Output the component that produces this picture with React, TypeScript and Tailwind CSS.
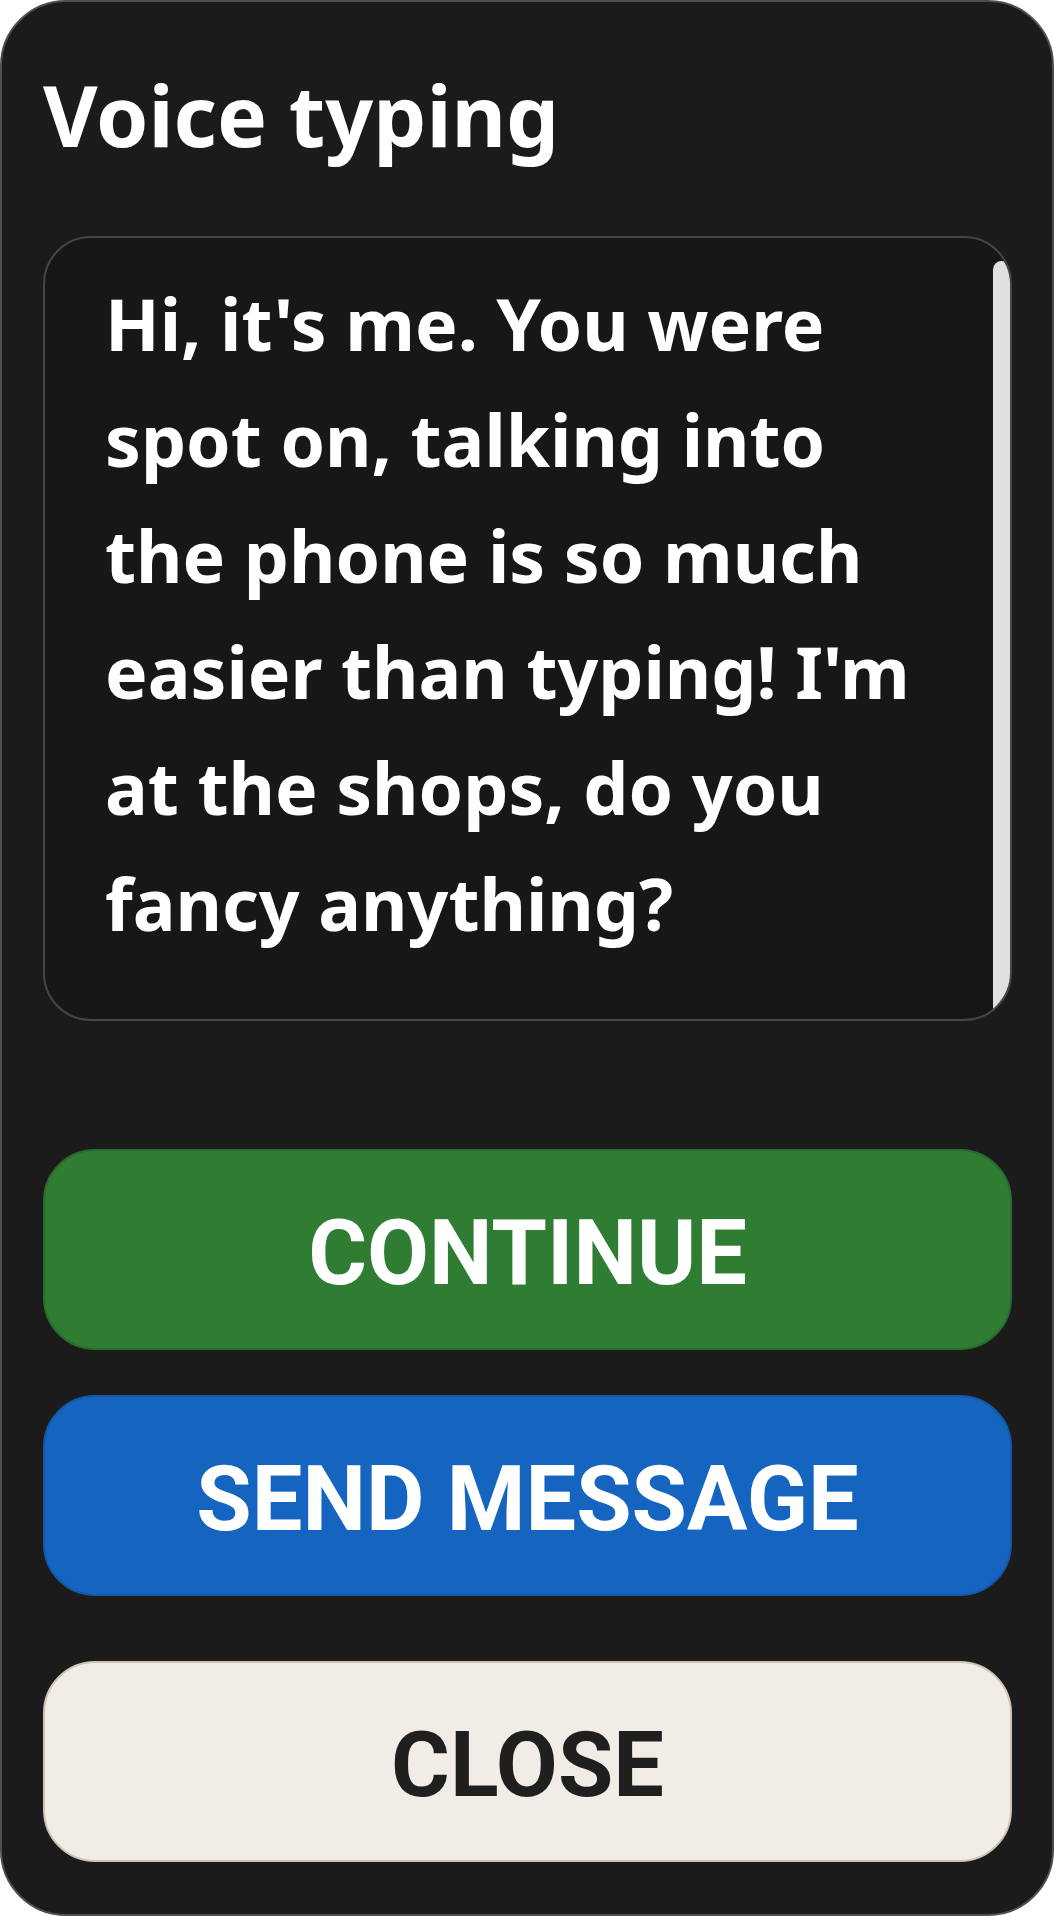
import React from 'react'

const message =
  "Hi, it's me. You were spot on, talking into the phone is so much easier than typing! I'm at the shops, do you fancy anything?"

type ActionProps = {
  label: string
  className: string
}

function ActionButton({ label, className }: ActionProps) {
  return (
    <button
      className={`flex h-[201px] w-full items-center justify-center rounded-[52px] border-2 pt-[9px] text-[90px] font-bold uppercase leading-none ${className}`}
      style={{ fontFamily: 'Roboto, "Liberation Sans", sans-serif' }}
    >
      {label}
    </button>
  )
}

export default function App() {
  return (
    <div className="min-h-screen bg-white">
      <div
        className="flex h-[1916px] w-[1054px] flex-col rounded-[66px] border-2 border-[#4f4f4f] bg-[#1b1b1b] pl-[41px] pr-[40px] pt-[63px]"
        style={{ fontFamily: '"Noto Sans", "Open Sans", sans-serif' }}
      >
        {/* title */}
        <h1 className="text-[84px] font-bold leading-[100px] text-white">Voice typing</h1>

        {/* transcript box with its scrollbar */}
        <div className="mt-[71px] flex h-[785px] overflow-hidden rounded-[48px] border-2 border-[#464646] bg-[#171717]">
          <div className="flex-1 pl-[60px] pr-[60px] pt-[28px]">
            <p className="text-[71.5px] font-bold leading-[116px] text-white">{message}</p>
          </div>
          <div className="flex w-[17px] flex-col pt-[23px]">
            <div className="flex-1 rounded-t-[9px] bg-[#e0e0e0]" />
          </div>
        </div>

        {/* actions */}
        <div className="mt-[128px] flex flex-col">
          <ActionButton label="Continue" className="border-[#2a6b2e] bg-[#2e7d32] text-white" />
          <div className="mt-[45px]">
            <ActionButton label="Send message" className="border-[#1459a8] bg-[#1565c0] text-white" />
          </div>
          <div className="mt-[65px]">
            <ActionButton label="Close" className="border-[#cdc4b6] bg-[#f1ede6] text-[#1f1f1f]" />
          </div>
        </div>
      </div>
    </div>
  )
}
